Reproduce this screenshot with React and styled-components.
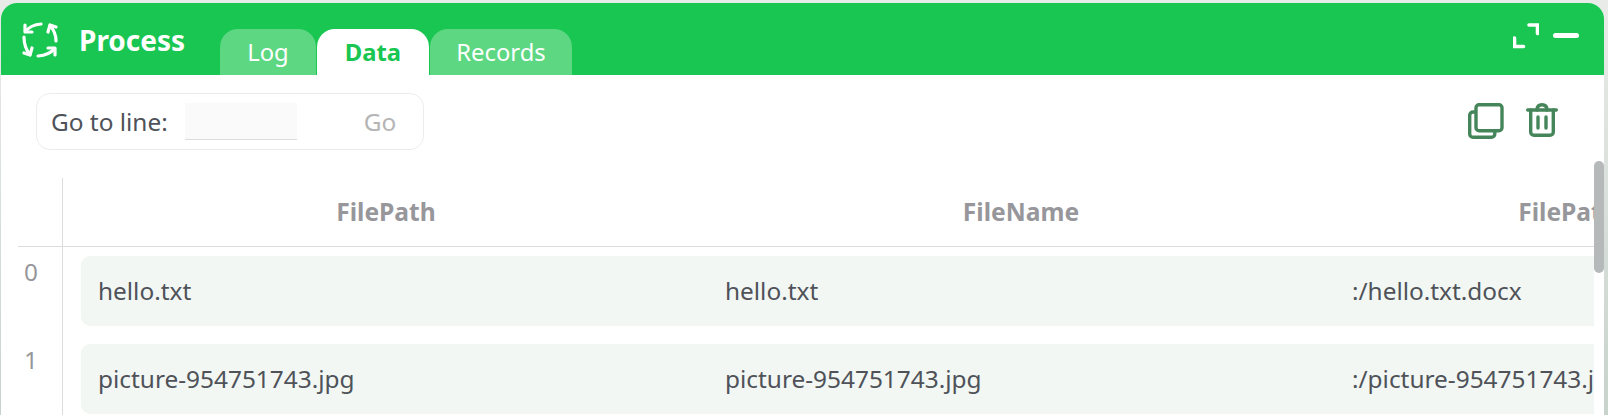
import React from 'react';
import styled, {createGlobalStyle} from 'styled-components';

const GlobalStyle = createGlobalStyle`
  html, body {
    margin: 0;
    padding: 0;
    height: 415px;
    overflow: hidden;
    background: linear-gradient(180deg, #e9ebe9 0%, #c8d3cd 100%);
    font-family: "Noto Sans", sans-serif;
  }
`;

const Page = styled.div`
  height: 415px;
  padding: 3px 4px 0 1px;
  box-sizing: border-box;
  overflow: hidden;
`;

const Panel = styled.div`
  position: relative;
  height: 412px;
  background: #fff;
  border-radius: 16px 16px 0 0;
  overflow: hidden;
`;

const Header = styled.div`
  display: flex;
  align-items: flex-start;
  height: 72px;
  background: #19c651;
  color: #fff;
`;

const Brand = styled.div`
  display: flex;
  align-items: center;
  width: 219px;
  height: 54px;
  padding: 19px 0 0 21px;
  box-sizing: border-box;
  gap: 21px;
  font-size: 28px;
  font-weight: 700;
`;

const Tabs = styled.div`
  display: flex;
  align-items: flex-end;
  height: 72px;
  gap: 1px;
`;

const Tab = styled.div`
  width: ${(p) => p.$width}px;
  height: 46px;
  line-height: 46px;
  text-align: center;
  font-size: 23.8px;
  font-weight: ${(p) => (p.$active ? 700 : 400)};
  color: ${(p) => (p.$active ? '#19c651' : '#fff')};
  background: ${(p) => (p.$active ? '#fff' : '#5dd782')};
  border-radius: 18px 18px 0 0;
`;

const WindowButtons = styled.div`
  display: flex;
  align-items: center;
  gap: 14px;
  margin-left: auto;
  padding: 20px 25px 0 0;
`;

const Toolbar = styled.div`
  display: flex;
  align-items: flex-start;
  justify-content: space-between;
  padding: 18px 46px 0 35px;
  height: 103px;
  box-sizing: border-box;
`;

const GotoBox = styled.div`
  display: flex;
  align-items: center;
  width: 388px;
  height: 57px;
  padding-left: 14px;
  box-sizing: border-box;
  border: 1px solid #ececec;
  border-radius: 14px;
  color: #4f5259;
  font-size: 24.4px;
`;

const GotoInput = styled.div`
  width: 112px;
  height: 37px;
  margin-left: 17px;
  background: #fafafa;
  border-bottom: 1px solid #dcdcdc;
  box-sizing: border-box;
`;

const GoLabel = styled.span`
  margin-left: 67px;
  color: #b5b5b5;
`;

const ToolIcons = styled.div`
  display: flex;
  gap: 22px;
  margin-top: 10px;
`;

const TableArea = styled.div`
  width: 1593px;
  overflow: hidden;
  padding-left: 17px;
  box-sizing: border-box;
`;

const Table = styled.div`
  width: 1900px;
`;

const HeaderRow = styled.div`
  display: grid;
  grid-template-columns: 44px 647px 624px 470px;
  height: 68px;
  border-bottom: 1px solid #dcdcdc;
`;

const HeaderCell = styled.div`
  display: flex;
  align-items: center;
  justify-content: center;
  padding-bottom: 2px;
  font-size: 24.6px;
  font-weight: 700;
  color: #97979b;
  border-left: ${(p) => (p.$divider ? '1px solid #dcdcdc' : 'none')};
  white-space: nowrap;
`;

const Row = styled.div`
  display: flex;
  height: 88px;
`;

const IndexCell = styled.div`
  flex: 0 0 45px;
  padding-top: 8px;
  padding-right: 18px;
  box-sizing: border-box;
  text-align: center;
  font-size: 24.4px;
  line-height: 34px;
  color: #97979b;
  border-right: 1px solid #dcdcdc;
`;

const RowBody = styled.div`
  display: grid;
  grid-template-columns: 627px 627px 627px;
  align-items: center;
  height: 70px;
  margin: 9px 0 0 18px;
  padding-bottom: 2px;
  box-sizing: border-box;
  background: #f2f7f3;
  border-radius: 9px;
  font-size: 24.4px;
  color: #4f5259;
`;

const Cell = styled.div`
  padding-left: 17px;
  white-space: nowrap;
`;

const Scrollbar = styled.div`
  position: absolute;
  top: 158px;
  right: 0;
  width: 10px;
  height: 112px;
  background: #b6b9b9;
  border-radius: 5px;
`;

const ProcessIcon = () => (
  <svg width="36" height="36" viewBox="0 0 36 36" fill="none" stroke="#fff" strokeWidth="3.2" strokeLinecap="round" strokeLinejoin="round">
    <path d="M3 3 V10 H10" />
    <path d="M3.5 9.5 C7 5 12 2.5 19 2" />
    <path d="M33 33 V26 H26" />
    <path d="M32.5 26.5 C29 31 23 33.5 16 34" />
    <path d="M26 10 L28 3 L34 5" />
    <path d="M28 3.5 C32 8 34 13 34 19" />
    <path d="M10 26 L8 33 L2 31" />
    <path d="M8 32.5 C4 28 2 22 2 15" />
  </svg>
);

const ExpandIcon = () => (
  <svg width="26" height="26" viewBox="0 0 26 26" fill="none" stroke="#fff" strokeWidth="3.6" strokeLinecap="round" strokeLinejoin="miter">
    <path d="M16 2 H24.5 V10.5" />
    <path d="M1.5 15 V23.5 H10.5" />
  </svg>
);

const MinimizeBar = styled.div`
  width: 26px;
  height: 5px;
  margin-top: -2px;
  background: #fff;
  border-radius: 3px;
`;

const CopyIcon = () => (
  <svg width="36" height="36" viewBox="0 0 36 36" fill="none" stroke="#45855a" strokeWidth="3.4" strokeLinejoin="round">
    <rect x="8" y="1.7" width="26" height="26" rx="3" />
    <path d="M8 9 H5 A3.3 3.3 0 0 0 1.7 12.3 V31 A3.3 3.3 0 0 0 5 34.3 H23.5 A3.3 3.3 0 0 0 26.8 31 V28" />
  </svg>
);

const TrashIcon = () => (
  <svg width="32" height="34" viewBox="0 0 32 34" fill="none" stroke="#45855a" strokeWidth="3.4" strokeLinecap="round" strokeLinejoin="round">
    <path d="M1.7 7 H30.3" />
    <path d="M11 7 C11 3.5 13 1.7 16 1.7 C19 1.7 21 3.5 21 7" />
    <path d="M4.7 7 V29 A3.3 3.3 0 0 0 8 32.3 H24 A3.3 3.3 0 0 0 27.3 29 V7" />
    <path d="M12 14 V25" />
    <path d="M20 14 V25" />
  </svg>
);

const rows = [
  ['hello.txt', 'hello.txt', ':/hello.txt.docx'],
  ['picture-954751743.jpg', 'picture-954751743.jpg', ':/picture-954751743.jpg.docx'],
];

const App = function () {
  return (
    <Page>
      <GlobalStyle />
      <Panel>
        <Header>
          <Brand>
            <ProcessIcon />
            Process
          </Brand>
          <Tabs>
            <Tab $width={96}>Log</Tab>
            <Tab $width={112} $active>Data</Tab>
            <Tab $width={142}>Records</Tab>
          </Tabs>
          <WindowButtons>
            <ExpandIcon />
            <MinimizeBar />
          </WindowButtons>
        </Header>
        <Toolbar>
          <GotoBox>
            Go to line:
            <GotoInput />
            <GoLabel>Go</GoLabel>
          </GotoBox>
          <ToolIcons>
            <CopyIcon />
            <TrashIcon />
          </ToolIcons>
        </Toolbar>
        <TableArea>
          <Table>
            <HeaderRow>
              <HeaderCell />
              <HeaderCell $divider>FilePath</HeaderCell>
              <HeaderCell>FileName</HeaderCell>
              <HeaderCell>FilePath</HeaderCell>
            </HeaderRow>
            {rows.map((row, i) => (
              <Row key={i}>
                <IndexCell>{i}</IndexCell>
                <RowBody>
                  {row.map((text, j) => (
                    <Cell key={j}>{text}</Cell>
                  ))}
                </RowBody>
              </Row>
            ))}
          </Table>
        </TableArea>
        <Scrollbar />
      </Panel>
    </Page>
  );
};

export default App;
